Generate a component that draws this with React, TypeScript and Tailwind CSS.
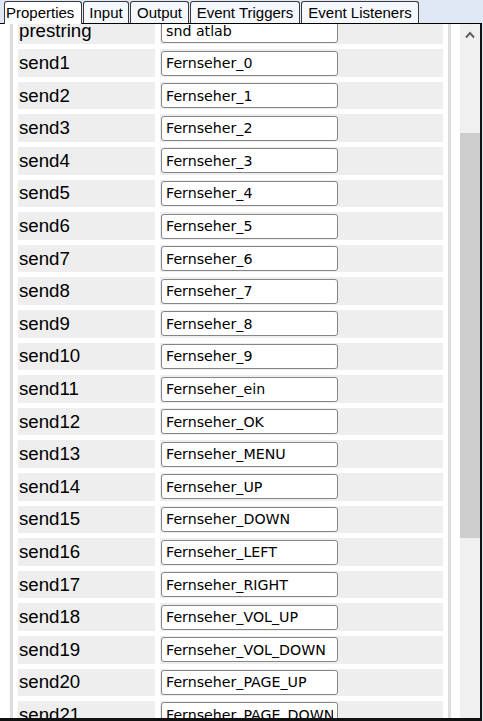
import React from 'react';

const tabs = [
  { label: 'Properties', width: 'w-[78px]', active: true },
  { label: 'Input', width: 'w-[46px]', active: false },
  { label: 'Output', width: 'w-[59px]', active: false },
  { label: 'Event Triggers', width: 'w-[110px]', active: false },
  { label: 'Event Listeners', width: 'w-[118px]', active: false },
];

const values = [
  'Fernseher_0',
  'Fernseher_1',
  'Fernseher_2',
  'Fernseher_3',
  'Fernseher_4',
  'Fernseher_5',
  'Fernseher_6',
  'Fernseher_7',
  'Fernseher_8',
  'Fernseher_9',
  'Fernseher_ein',
  'Fernseher_OK',
  'Fernseher_MENU',
  'Fernseher_UP',
  'Fernseher_DOWN',
  'Fernseher_LEFT',
  'Fernseher_RIGHT',
  'Fernseher_VOL_UP',
  'Fernseher_VOL_DOWN',
  'Fernseher_PAGE_UP',
  'Fernseher_PAGE_DOWN',
];

const rows = [
  { name: 'prestring', value: 'snd atlab' },
  ...values.map((value, i) => ({ name: `send${i + 1}`, value })),
];

function PropertyRow({ name, value }: { name: string; value: string }) {
  return (
    <div className="flex h-[27.6px] shrink-0 gap-[5px]">
      <div className="flex w-[137px] items-center bg-[#eeeeee] pl-[1px] text-[18.67px] text-black [font-family:'Liberation_Sans',Arial,sans-serif]">
        {name}
      </div>
      <div className="flex flex-1 items-center bg-[#eeeeee] pl-[1px]">
        <input
          type="text"
          readOnly
          value={value}
          className="h-[25px] w-[177px] rounded-[3px] border border-[#858585] bg-white px-[4px] text-[14.2px] text-black outline-none [font-family:'DejaVu_Sans',Verdana,sans-serif]"
        />
      </div>
    </div>
  );
}

export default function App() {
  return (
    <div className="h-[721px] w-[483px] overflow-hidden bg-[#dfe8f4]">
      <div className="flex h-[24px] w-[482px] items-end gap-[1px] border-b border-black pl-[4px] [font-family:'Liberation_Sans',Arial,sans-serif]">
        {tabs.map((tab) =>
          tab.active ? (
            <div
              key={tab.label}
              className={`${tab.width} relative z-10 mb-[-1px] flex h-[23px] items-center rounded-t-[3px] border border-b-0 border-[#3a3a3a] bg-white pl-[1px] pt-[1px] text-[15px] text-black`}
            >
              {tab.label}
            </div>
          ) : (
            <div
              key={tab.label}
              className={`${tab.width} flex h-[22px] items-center justify-center rounded-t-[3px] border border-b-0 border-[#3a3a3a] bg-[#f4f7fb] pt-[1px] text-[15px] text-black`}
            >
              {tab.label}
            </div>
          )
        )}
      </div>

      <div className="flex h-[697px] w-[482px] border-b-[3px] border-r-2 border-[#111111] bg-white">
        <div className="h-full w-[460px] overflow-hidden">
          <div className="ml-[10px] h-full w-[441px] overflow-hidden border-x-[3px] border-[#dddddd] px-[5px]">
            <div className="mt-[-7.3px] flex flex-col gap-[5px]">
              {rows.map((row) => (
                <PropertyRow key={row.name} name={row.name} value={row.value} />
              ))}
            </div>
          </div>
        </div>

        <div className="flex h-full w-[20px] flex-col bg-[#f0f0f0]">
          <div className="flex h-[20px] items-center justify-center pt-[2px]">
            <svg width="10" height="8" viewBox="0 0 10 8">
              <polyline points="1,6.5 5,2 9,6.5" fill="none" stroke="#606060" strokeWidth="2" />
            </svg>
          </div>
          <div className="mt-[89px] h-[405px] bg-[#cdcdcd]" />
        </div>
      </div>
    </div>
  );
}
